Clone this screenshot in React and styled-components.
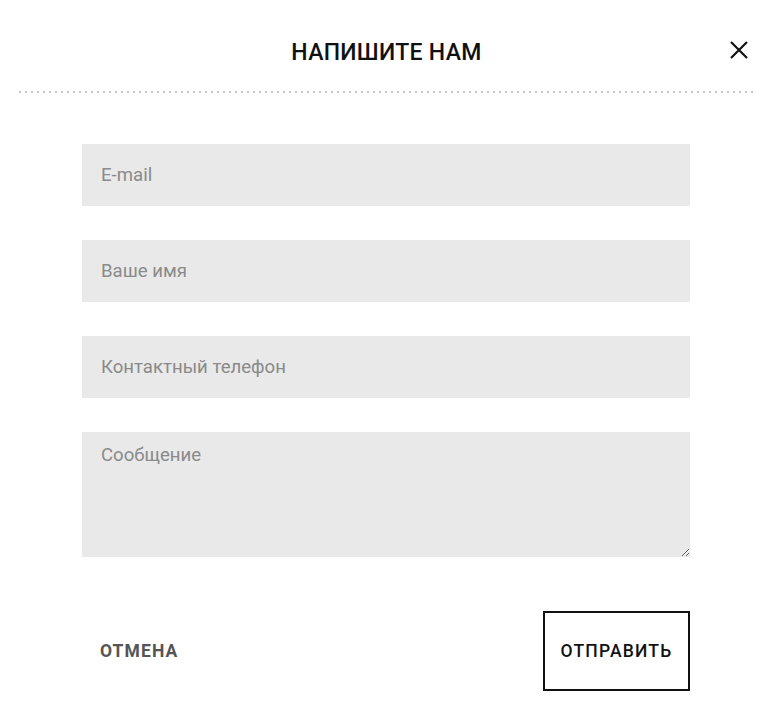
import React from "react";
import styled, { createGlobalStyle } from "styled-components";

const GlobalStyle = createGlobalStyle`
  html, body {
    margin: 0;
    padding: 0;
    background: #fff;
  }
  body {
    font-family: Roboto, "Noto Sans", sans-serif;
  }
`;

const Modal = styled.div`
  width: 773px;
  height: 706px;
  box-sizing: border-box;
  display: flex;
  flex-direction: column;
`;

const Header = styled.div`
  position: relative;
  height: 93px;
  margin: 0 17px;
  display: flex;
  align-items: flex-start;
  justify-content: center;
  padding-top: 39px;
  box-sizing: border-box;
  background-image: radial-gradient(circle, #c4c4c4 0.9px, transparent 1px);
  background-size: 6px 2px;
  background-position: 0 bottom;
  background-repeat: repeat-x;
`;

const Title = styled.h2`
  margin: 0;
  font-size: 23px;
  line-height: 28px;
  font-weight: 500;
  color: #111;
  letter-spacing: 0.3px;
`;

const Close = styled.button`
  position: absolute;
  right: 4px;
  top: 37px;
  width: 26px;
  height: 26px;
  padding: 0;
  border: none;
  background: none;
  cursor: pointer;
  display: flex;
  align-items: center;
  justify-content: center;
`;

const Form = styled.form`
  display: flex;
  flex-direction: column;
  gap: 34px;
  padding: 51px 83px 0 82px;
`;

const Field = styled.input`
  height: 62px;
  border: none;
  background: #e9e9e9;
  padding: 0 19px;
  font-family: Roboto, sans-serif;
  font-size: 18.6px;
  color: #333;
  outline: none;
  box-sizing: border-box;
  width: 100%;
  &::placeholder {
    color: #8a8a8a;
  }
`;

const Message = styled.textarea`
  height: 125px;
  border: none;
  background: #e9e9e9;
  padding: 12px 19px;
  font-family: Roboto, sans-serif;
  font-size: 18.6px;
  color: #333;
  outline: none;
  box-sizing: border-box;
  width: 100%;
  resize: vertical;
  &::placeholder {
    color: #8a8a8a;
  }
`;

const Actions = styled.div`
  display: flex;
  justify-content: space-between;
  align-items: center;
  padding: 54px 83px 0 82px;
`;

const TextButton = styled.button`
  border: none;
  background: none;
  padding: 0 18px;
  height: 80px;
  font-family: Roboto, sans-serif;
  font-size: 17.5px;
  font-weight: 700;
  letter-spacing: 1.1px;
  color: #555;
  cursor: pointer;
`;

const OutlineButton = styled.button`
  width: 147px;
  height: 80px;
  box-sizing: border-box;
  border: 2px solid #111;
  background: #fff;
  font-family: Roboto, sans-serif;
  font-size: 17.5px;
  font-weight: 500;
  letter-spacing: 1.2px;
  color: #111;
  cursor: pointer;
`;

export default function App() {
  return (
    <>
      <GlobalStyle />
      <Modal>
        <Header>
          <Title>НАПИШИТЕ НАМ</Title>
          <Close aria-label="Закрыть">
            <svg width="20" height="20" viewBox="0 0 20 20">
              <path d="M2 2 L18 18 M18 2 L2 18" stroke="#111" strokeWidth="2.2" />
            </svg>
          </Close>
        </Header>
        <Form onSubmit={(e) => e.preventDefault()}>
          <Field type="email" placeholder="E-mail" />
          <Field type="text" placeholder="Ваше имя" />
          <Field type="tel" placeholder="Контактный телефон" />
          <Message placeholder="Сообщение" />
        </Form>
        <Actions>
          <TextButton>ОТМЕНА</TextButton>
          <OutlineButton>ОТПРАВИТЬ</OutlineButton>
        </Actions>
      </Modal>
    </>
  );
}
